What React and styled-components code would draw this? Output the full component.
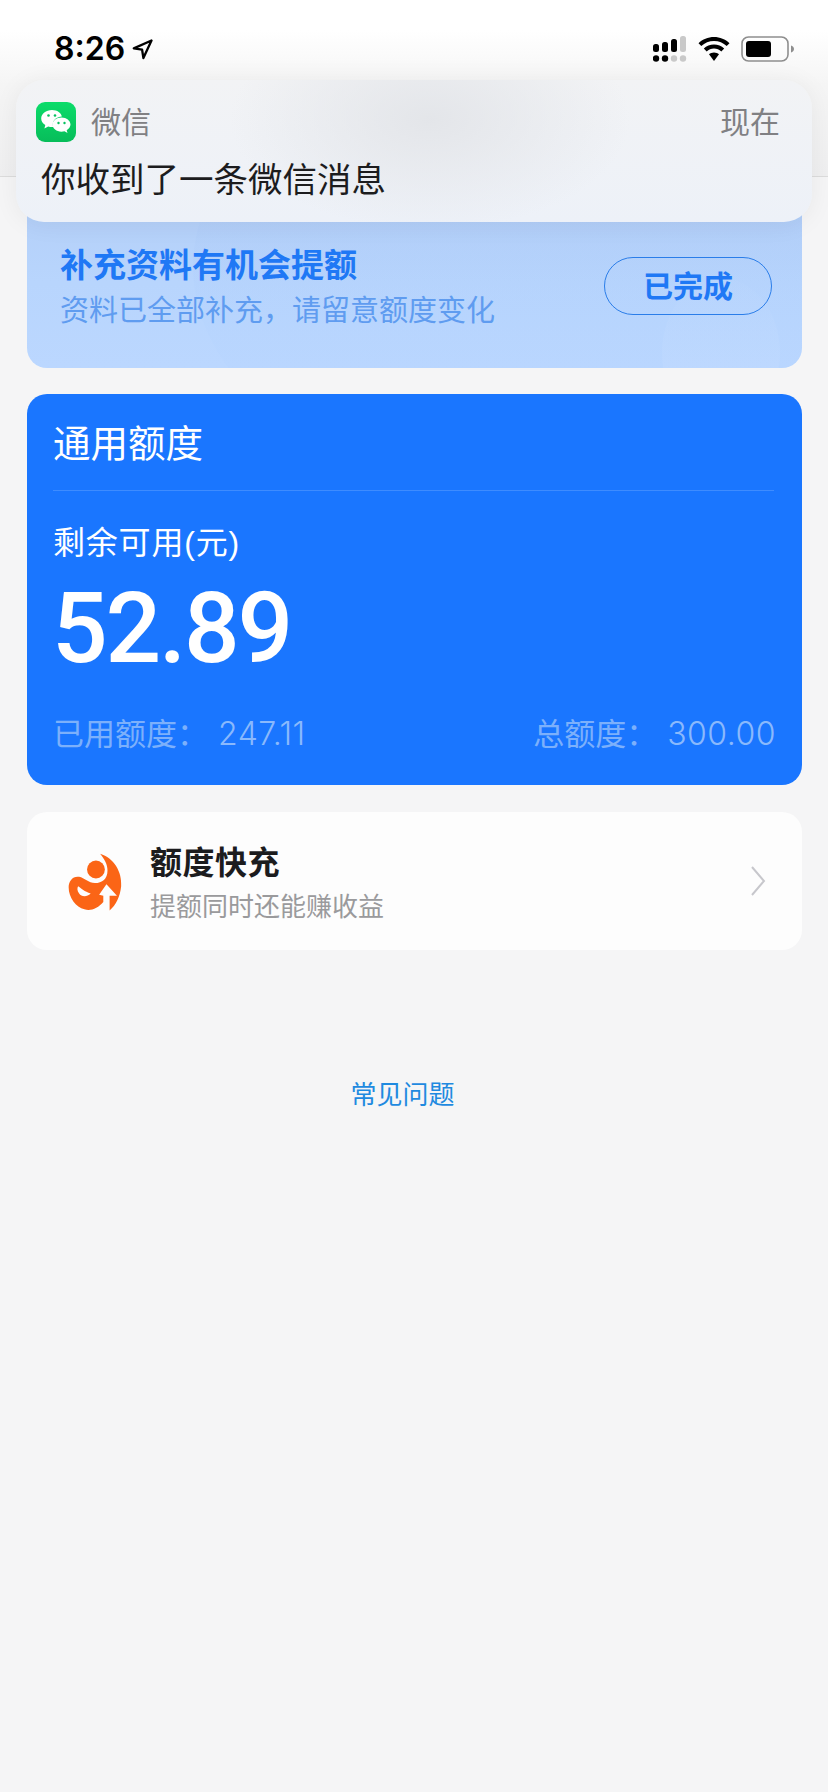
import React from 'react';
import styled, { createGlobalStyle } from 'styled-components';

const Global = createGlobalStyle`
  html, body { margin: 0; padding: 0; background: #f5f5f6; }
  body { font-family: "Liberation Sans", "Noto Sans CJK SC", sans-serif; }
  * { box-sizing: border-box; }
`;
const Page = styled.div`
  position: relative;
  width: 828px;
  height: 1792px;
  background: #f5f5f6;
  overflow: hidden;
`;
const Header = styled.header`
  height: 177px;
  padding: 29px 34px 0 54px;
  display: flex;
  align-items: flex-start;
  justify-content: space-between;
  background: linear-gradient(#ffffff 0, #ffffff 30px, #f5f5f5 85px, #efeff0 176px);
  border-bottom: 1px solid #dcdcdc;
`;
const Time = styled.div`
  display: flex;
  align-items: center;
  gap: 7px;
  font: 600 32px/40px Inter, "Liberation Sans", sans-serif;
  color: #000;
`;
const StatusIcons = styled.div`
  display: flex;
  align-items: center;
  gap: 11px;
  height: 40px;
`;
const Notification = styled.div`
  position: absolute;
  z-index: 2;
  left: 16px;
  top: 80px;
  width: 796px;
  height: 142px;
  border-radius: 28px;
  padding: 22px 32px 0 20px;
  background:
    radial-gradient(ellipse 200px 110px at 52% 28%, rgba(226,228,232,.9), rgba(226,228,232,0)),
    linear-gradient(#f2f3f5, #edf1f8);
  box-shadow: 0 2px 26px rgba(0,0,0,.06);
`;
const NotifyTop = styled.div`
  display: flex;
  align-items: center;
  height: 40px;
`;
const AppIcon = styled.div`
  width: 40px;
  height: 40px;
  border-radius: 9px;
  background: linear-gradient(#0bdc6a, #07bd5a);
  display: flex;
  align-items: center;
  justify-content: center;
`;
const AppName = styled.div`
  margin-left: 15px;
  padding-top: 2px;
  font-size: 30px;
  line-height: 40px;
  color: #808083;
  flex: 1;
`;
const NotifyTime = styled.div`
  padding-top: 2px;
  font-size: 30px;
  line-height: 40px;
  color: #808083;
`;
const NotifyText = styled.div`
  margin: 15px 0 0 5px;
  font-size: 34.500px;
  line-height: 46px;
  color: #1c1c1e;
`;
const Content = styled.main`
  padding: 0 26px 0 27px;
  display: flex;
  flex-direction: column;
`;
const Promo = styled.section`
  position: relative;
  height: 191px;
  padding: 70px 30px 0 33px;
  display: flex;
  justify-content: space-between;
  border-radius: 0 0 20px 20px;
  overflow: hidden;
  background: linear-gradient(#b2cdf6 0%, #b8d5fd 55%, #bbd7ff 100%);
`;
const PromoArc = styled.div`
  position: absolute;
  left: 166px;
  top: -170px;
  width: 900px;
  height: 520px;
  border-radius: 50%;
  background: linear-gradient(rgba(160,188,236,.3), rgba(170,205,255,.12) 60%, rgba(170,205,255,.06));
`;
const PromoCircle = styled.div`
  position: absolute;
  right: 22px;
  bottom: -60px;
  width: 118px;
  height: 150px;
  border-radius: 50%;
  background: linear-gradient(rgba(200,222,255,.05), rgba(200,222,255,.4));
`;
const PromoText = styled.div`
  position: relative;
  display: flex;
  flex-direction: column;
`;
const PromoTitle = styled.div`
  font-size: 33px;
  line-height: 38px;
  font-weight: 700;
  color: #1f78f5;
`;
const PromoSub = styled.div`
  margin-top: 7px;
  font-size: 29px;
  line-height: 38px;
  color: #5f9cf0;
`;
const DoneButton = styled.div`
  position: relative;
  width: 168px;
  height: 58px;
  margin-top: 10px;
  padding-bottom: 5px;
  border: 1px solid #2a7de9;
  border-radius: 29px;
  display: flex;
  align-items: center;
  justify-content: center;
  font-size: 30px;
  font-weight: 700;
  color: #1f78f5;
`;
const QuotaCard = styled.section`
  margin-top: 26px;
  height: 391px;
  border-radius: 20px;
  background: #1a76ff;
  padding: 0 26px 0 26px;
  display: flex;
  flex-direction: column;
  color: #fff;
`;
const QuotaTitle = styled.div`
  height: 97px;
  margin-right: 2px;
  padding-bottom: 4px;
  display: flex;
  align-items: center;
  font-size: 37.500px;
  border-bottom: 1px solid rgba(255,255,255,.16);
`;
const RemainLabel = styled.div`
  margin-top: 30px;
  font-size: 32px;
  letter-spacing: .8px;
  line-height: 44px;
`;
const Amount = styled.div`
  margin: 14px 0 0 -1px;
  font: 500 98px/100px Roboto, "Liberation Sans", sans-serif;
  letter-spacing: -2.200px;
`;
const QuotaFoot = styled.div`
  margin-top: 33px;
  display: flex;
  justify-content: space-between;
  font-size: 31px;
  line-height: 44px;
  color: #7cb0fb;
`;
const FootNum = styled.span`
  margin-left: 10px;
  font-family: Inter, "Liberation Sans", sans-serif;
  font-size: 32px;
  font-weight: 300;
  letter-spacing: .5px;
  color: #8ab9fc;
`;
const BoostCard = styled.section`
  margin-top: 27px;
  height: 138px;
  border-radius: 20px;
  background: #fdfdfd;
  display: flex;
  align-items: center;
  padding: 0 36px 0 28px;
`;
const BoostLogo = styled.svg`
  width: 84px;
  height: 84px;
  flex: none;
`;
const BoostBody = styled.div`
  margin-left: 11px;
  padding-top: 6px;
  flex: 1;
  display: flex;
  flex-direction: column;
`;
const BoostTitle = styled.div`
  font-size: 32px;
  letter-spacing: .5px;
  font-weight: 700;
  line-height: 44px;
  color: #1c1c1e;
`;
const BoostSub = styled.div`
  margin-top: 2px;
  font-size: 26px;
  line-height: 40px;
  color: #9a9a9c;
`;
const Chevron = styled.svg`
  width: 16px;
  height: 32px;
  flex: none;
`;
const Faq = styled.a`
  margin-top: 125px;
  padding-right: 24px;
  text-align: center;
  font-size: 26px;
  line-height: 40px;
  color: #1f8ae0;
`;

const SignalIcon = () => (
  <svg width="34" height="26" viewBox="0 0 34 26">
    <rect x="0" y="8" width="6" height="8" rx="2.5" fill="#000" />
    <rect x="9" y="6" width="6" height="10" rx="2.5" fill="#000" />
    <rect x="18" y="3" width="6" height="13" rx="2.5" fill="#000" />
    <rect x="27" y="0" width="6" height="16" rx="2.5" fill="#c9c9c9" />
    <circle cx="3" cy="22.5" r="3.2" fill="#000" />
    <circle cx="12" cy="22.5" r="3.2" fill="#000" />
    <circle cx="21" cy="22.5" r="3.2" fill="#c9c9c9" />
    <circle cx="30" cy="22.5" r="3.2" fill="#c9c9c9" />
  </svg>
);
const WifiIcon = () => (
  <svg width="32" height="24" viewBox="0 0 32 24">
    <path d="M16 0C10 0 4.600 2.300 0.500 6.200L3.300 9.100C6.700 5.900 11.100 4 16 4s9.300 1.900 12.700 5.100l2.800-2.900C27.400 2.300 22 0 16 0z" fill="#000" />
    <path d="M16 7.600c-3.900 0-7.500 1.500-10.200 4l2.900 2.900c1.900-1.800 4.500-2.900 7.300-2.900s5.400 1.100 7.300 2.900l2.900-2.900c-2.700-2.500-6.300-4-10.200-4z" fill="#000" />
    <path d="M16 15.400c-2 0-3.700.7-5 1.900l5 6.700 5-6.700c-1.300-1.200-3-1.900-5-1.900z" fill="#000" />
  </svg>
);
const BatteryIcon = () => (
  <svg width="53" height="26" viewBox="0 0 53 26">
    <rect x="1" y="1" width="46" height="24" rx="6.500" fill="none" stroke="#8e8e8e" strokeWidth="1.600" />
    <rect x="5" y="5" width="25" height="16" rx="3" fill="#000" />
    <path d="M50 9.500c1.600.6 3 1.800 3 3.500s-1.400 2.900-3 3.500z" fill="#8e8e8e" />
  </svg>
);
const LocationIcon = () => (
  <svg width="21" height="21" viewBox="0 0 21 21">
    <path d="M19.500 1.500 1.800 9.400l8.300 1.300 1.300 8.300z" fill="none" stroke="#000" strokeWidth="2.300" strokeLinejoin="round" />
  </svg>
);
const WechatIcon = () => (
  <svg width="32" height="32" viewBox="0 0 32 32">
    <path d="M12 4C6 4 1.200 7.800 1.200 12.500c0 2.700 1.600 5 4.100 6.600l-.9 3.300 3.800-2c1.300.4 2.600.6 3.800.6.400 0 .8 0 1.200-.1-.3-.9-.4-1.700-.4-2.500 0-4.300 4.100-7.600 9-7.800C21.500 6.900 17.200 4 12 4z" fill="#fff" />
    <path d="M21.500 11.500c-5 0-9 3.200-9 7.100s4 7.100 9 7.100c1 0 2-.1 3-.4l3 1.700-.8-2.700c2.200-1.400 3.800-3.500 3.800-5.700 0-3.900-4-7.100-9-7.100z" fill="#fff" />
    <circle cx="8.500" cy="9.500" r="1.300" fill="#07c160" />
    <circle cx="15" cy="9.500" r="1.300" fill="#07c160" />
    <circle cx="18.500" cy="17" r="1.200" fill="#07c160" />
    <circle cx="24.500" cy="17" r="1.200" fill="#07c160" />
  </svg>
);

export default function App() {
  return (
    <Page>
      <Global />
      <Header>
        <Time>
          8:26
          <LocationIcon />
        </Time>
        <StatusIcons>
          <SignalIcon />
          <WifiIcon />
          <BatteryIcon />
        </StatusIcons>
      </Header>
      <Notification>
        <NotifyTop>
          <AppIcon>
            <WechatIcon />
          </AppIcon>
          <AppName>微信</AppName>
          <NotifyTime>现在</NotifyTime>
        </NotifyTop>
        <NotifyText>你收到了一条微信消息</NotifyText>
      </Notification>
      <Content>
        <Promo>
          <PromoArc />
          <PromoCircle />
          <PromoText>
            <PromoTitle>补充资料有机会提额</PromoTitle>
            <PromoSub>资料已全部补充，请留意额度变化</PromoSub>
          </PromoText>
          <DoneButton>已完成</DoneButton>
        </Promo>
        <QuotaCard>
          <QuotaTitle>通用额度</QuotaTitle>
          <RemainLabel>剩余可用(元)</RemainLabel>
          <Amount>52.89</Amount>
          <QuotaFoot>
            <div>
              已用额度：<FootNum>247.11</FootNum>
            </div>
            <div>
              总额度：<FootNum>300.00</FootNum>
            </div>
          </QuotaFoot>
        </QuotaCard>
        <BoostCard>
          <BoostLogo viewBox="0 0 80 80">
            <path d="M43 14C56 18 64 31 63 45C62 55 58 63 52 68L52 54L59 54L49 43L42 53L46 54L46 60C41 66 34 69 28 67C20 65 13 56 13 46C13 40 17 35 23 36C28 37 32 42 38 42C45 42 50 38 50 30C50 24 47 19 43 14Z" fill="#fb6516" />
            <circle cx="39" cy="29" r="8.500" fill="#fb6516" />
            <path d="M22 45C25 47 28 50 34 52C30 56 25 55 23 52C21 49 21 47 22 45Z" fill="#fdfdfd" />
          </BoostLogo>
          <BoostBody>
            <BoostTitle>额度快充</BoostTitle>
            <BoostSub>提额同时还能赚收益</BoostSub>
          </BoostBody>
          <Chevron viewBox="0 0 16 32">
            <path d="M2 2 14 16 2 30" fill="none" stroke="#c7c7cc" strokeWidth="2" />
          </Chevron>
        </BoostCard>
        <Faq>常见问题</Faq>
      </Content>
    </Page>
  );
}
